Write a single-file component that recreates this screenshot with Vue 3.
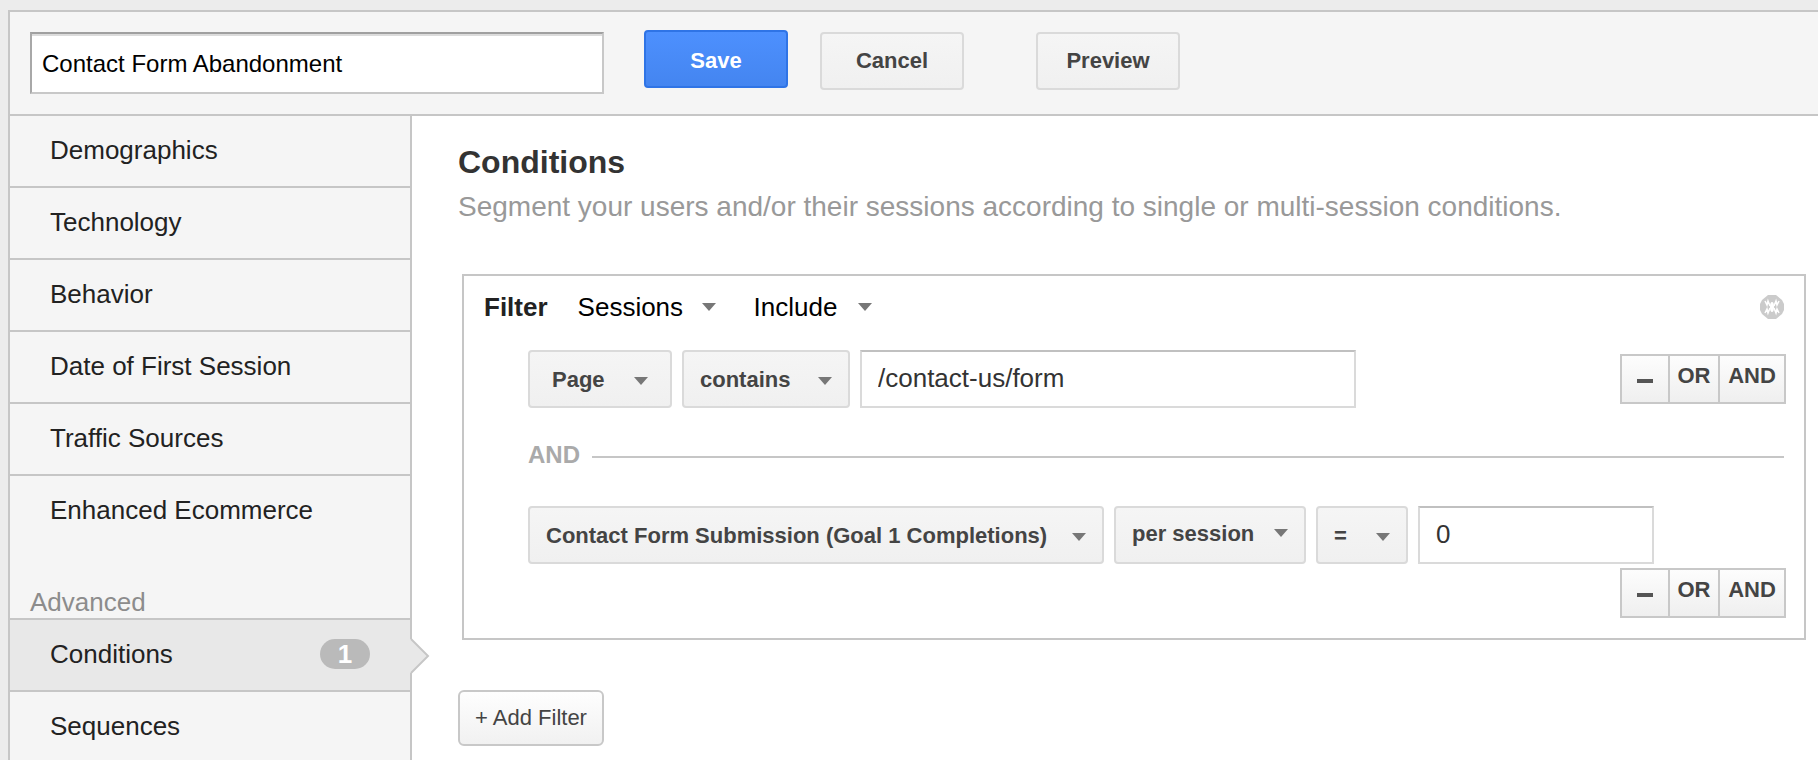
<script setup>
import { ref } from 'vue'

const segmentName = ref('Contact Form Abandonment')
const basicItems = ['Demographics', 'Technology', 'Behavior', 'Date of First Session', 'Traffic Sources', 'Enhanced Ecommerce']
const scope = ref('Sessions')
const mode = ref('Include')
const pageValue = ref('/contact-us/form')
const goalValue = ref('0')
</script>

<template>
  <div class="page">
    <div class="panel">
      <header class="toolbar">
        <input v-model="segmentName" class="name" type="text" aria-label="Segment name" />
        <button class="btn primary" type="button">Save</button>
        <button class="btn cancel" type="button">Cancel</button>
        <button class="btn preview" type="button">Preview</button>
      </header>
      <div class="body">
        <nav class="sidebar">
          <a v-for="item in basicItems" :key="item" class="item" href="#">{{ item }}</a>
          <h2 class="group">Advanced</h2>
          <a class="item active" href="#">
            <span>Conditions</span>
            <span class="badge">1</span>
            <svg class="pointer" width="22" height="40" viewBox="0 0 22 40" aria-hidden="true">
              <path d="M0 2 L1 2 L18 19 L1 36 L0 36 Z" fill="#e8e8e8" />
              <path d="M1 2 L18 19 L1 36" fill="none" stroke="#c6c6c6" stroke-width="2" />
            </svg>
          </a>
          <a class="item" href="#">Sequences</a>
        </nav>
        <main class="content">
          <h1>Conditions</h1>
          <p class="lead">Segment your users and/or their sessions according to single or multi-session conditions.</p>

          <section class="filter">
            <div class="filter-head">
              <strong>Filter</strong>
              <div class="pick flat sessions">
                <select v-model="scope" aria-label="Filter scope"><option>Sessions</option></select>
                <svg width="14" height="8" viewBox="0 0 14 8" aria-hidden="true"><path d="M0 0H14L7 8Z" /></svg>
              </div>
              <div class="pick flat include">
                <select v-model="mode" aria-label="Filter mode"><option>Include</option></select>
                <svg width="14" height="8" viewBox="0 0 14 8" aria-hidden="true"><path d="M0 0H14L7 8Z" /></svg>
              </div>
              <button class="close" type="button" aria-label="Remove filter">
                <svg width="24" height="24" viewBox="0 0 24 24" aria-hidden="true">
                  <path d="M8 0H16L22 5L24 9V15L22 19L16 24H8L2 19L0 15V9L2 5Z" fill="#cbcbcb" />
                  <ellipse cx="12" cy="12" rx="2" ry="5" fill="#fff" />
                  <path
                    d="M5 6L7 10L8 6L10 11M19 6L17 10L16 6L14 11M5 18L7 14L8 18L10 13M19 18L17 14L16 18L14 13"
                    fill="none"
                    stroke="#fff"
                    stroke-width="1.5"
                  />
                </svg>
              </button>
            </div>

            <div class="row">
              <div class="pick page-dim">
                <select aria-label="Dimension"><option>Page</option></select>
                <svg width="14" height="8" viewBox="0 0 14 8" aria-hidden="true"><path d="M0 0H14L7 8Z" /></svg>
              </div>
              <div class="pick contains">
                <select aria-label="Match type"><option>contains</option></select>
                <svg width="14" height="8" viewBox="0 0 14 8" aria-hidden="true"><path d="M0 0H14L7 8Z" /></svg>
              </div>
              <input v-model="pageValue" class="value wide" type="text" aria-label="Page value" />
              <div class="ops">
                <button type="button" aria-label="Remove condition"><span class="minus"></span></button>
                <button type="button">OR</button>
                <button type="button">AND</button>
              </div>
            </div>

            <div class="joiner"><span>AND</span><hr /></div>

            <div class="row second">
              <div class="pick goal">
                <select aria-label="Metric"><option>Contact Form Submission (Goal 1 Completions)</option></select>
                <svg width="14" height="8" viewBox="0 0 14 8" aria-hidden="true"><path d="M0 0H14L7 8Z" /></svg>
              </div>
              <div class="pick per">
                <select aria-label="Metric scope"><option>per session</option></select>
                <svg width="14" height="8" viewBox="0 0 14 8" aria-hidden="true"><path d="M0 0H14L7 8Z" /></svg>
              </div>
              <div class="pick equals">
                <select aria-label="Comparison"><option>=</option></select>
                <svg width="14" height="8" viewBox="0 0 14 8" aria-hidden="true"><path d="M0 0H14L7 8Z" /></svg>
              </div>
              <input v-model="goalValue" class="value narrow" type="text" aria-label="Metric value" />
            </div>
            <div class="ops below">
              <button type="button" aria-label="Remove condition"><span class="minus"></span></button>
              <button type="button">OR</button>
              <button type="button">AND</button>
            </div>
          </section>

          <button class="add" type="button">+ Add Filter</button>
        </main>
      </div>
    </div>
  </div>
</template>

<style>
body {
  margin: 0;
  background: #ececec;
}
</style>

<style scoped>
.page,
.page * {
  box-sizing: border-box;
}
.page {
  height: 100vh;
  padding: 10px 0 0 8px;
  display: flex;
  font-family: "Liberation Sans", Arial, sans-serif;
  color: #222;
  overflow: hidden;
}
button,
input,
select {
  font-family: inherit;
  margin: 0;
}
.panel {
  flex: 1;
  min-width: 0;
  display: flex;
  flex-direction: column;
  border: 2px solid #c6c6c6;
  border-width: 2px 0 0 2px;
  background: #fff;
}
.toolbar {
  flex: none;
  display: flex;
  align-items: flex-start;
  padding: 18px 20px 20px;
  background: #f5f5f5;
  border-bottom: 2px solid #c6c6c6;
}
.name {
  width: 574px;
  height: 62px;
  margin-top: 2px;
  padding: 2px 10px 0;
  border: 2px solid #c8c8c8;
  border-top-color: #a0a0a0;
  border-left-color: #a8a8a8;
  box-shadow: inset 0 2px 0 #dcdcdc;
  background: #fff;
  font-size: 24px;
  color: #000;
}
.btn {
  width: 144px;
  height: 58px;
  margin-top: 2px;
  padding: 0;
  border: 2px solid #dadada;
  border-radius: 4px;
  background: linear-gradient(#f5f5f5, #f0f0f0);
  font-size: 22px;
  font-weight: bold;
  color: #444;
}
.primary {
  margin: 0 0 0 40px;
  padding: 4px 0 0;
  border-color: #2f74e6;
  background: linear-gradient(#4d90fe, #4485f0);
  color: #fff;
}
.cancel {
  margin-left: 32px;
}
.preview {
  margin-left: 72px;
}
.body {
  flex: 1;
  min-height: 0;
  display: flex;
}
.sidebar {
  width: 402px;
  flex: none;
  background: #f5f5f5;
  border-right: 2px solid #c6c6c6;
}
.item {
  position: relative;
  display: flex;
  align-items: center;
  justify-content: space-between;
  height: 72px;
  padding: 0 40px 2px;
  border-bottom: 2px solid #c6c6c6;
  font-size: 26px;
  line-height: 30px;
  color: #222;
  text-decoration: none;
}
.item:nth-of-type(6) {
  border-bottom-color: transparent;
}
.group {
  margin: 0;
  height: 72px;
  padding: 39px 20px 0;
  border-bottom: 2px solid #c6c6c6;
  font-size: 26px;
  line-height: 30px;
  font-weight: normal;
  color: #8c8c8c;
}
.active {
  background: #e8e8e8;
}
.badge {
  width: 50px;
  height: 30px;
  border-radius: 15px;
  background: #bababa;
  color: #fff;
  font-size: 26px;
  font-weight: bold;
  text-align: center;
}
.pointer {
  position: absolute;
  left: 100%;
  top: 17px;
}
.content {
  flex: 1;
  min-width: 0;
  padding: 26px 12px 14px 46px;
}
h1 {
  margin: 0;
  font-size: 32px;
  line-height: 40px;
  color: #333;
}
.lead {
  margin: 7px 0 0;
  font-size: 28px;
  line-height: 36px;
  color: #999;
}
.filter {
  margin: 49px 0 50px 4px;
  padding: 13px 18px 20px 20px;
  border: 2px solid #c6c6c6;
}
.filter-head {
  display: flex;
  align-items: center;
  height: 36px;
  font-size: 26px;
}
.pick {
  position: relative;
  flex: none;
}
.pick svg {
  position: absolute;
  top: 27px;
  right: 18px;
  fill: #777;
  pointer-events: none;
}
.pick select {
  appearance: none;
  display: block;
  width: 100%;
  height: 58px;
  padding: 0 16px;
  border: 2px solid #dadada;
  border-radius: 4px;
  background: linear-gradient(#f5f5f5, #f0f0f0);
  font-size: 22px;
  font-weight: bold;
  color: #444;
}
.pick.flat select {
  height: 36px;
  padding: 0;
  border: 0;
  background: none;
  font-size: 26px;
  font-weight: normal;
  color: #000;
}
.pick.flat svg {
  top: 14px;
  right: 0;
}
.sessions {
  width: 138px;
  margin-left: 30px;
}
.include {
  width: 118px;
  margin-left: 38px;
}
.close {
  margin-left: auto;
  margin-right: 2px;
  padding: 0;
  border: 0;
  background: none;
}
.close svg {
  display: block;
}
.row {
  display: flex;
  gap: 10px;
  margin: 25px 0 0 44px;
}
.page-dim {
  width: 144px;
}
.page-dim select {
  padding-left: 22px;
}
.pick.page-dim svg {
  right: 24px;
}
.contains {
  width: 168px;
}
.value {
  height: 58px;
  padding: 0 16px 2px;
  border: 2px solid #dadada;
  border-top-color: #c0c0c0;
  background: #fff;
  font-size: 26px;
  color: #333;
}
.wide {
  width: 496px;
}
.narrow {
  width: 236px;
}
.goal {
  width: 576px;
}
.per {
  width: 192px;
}
.pick.per select {
  padding-bottom: 4px;
}
.pick.per svg {
  top: 23px;
}
.equals {
  width: 92px;
}
.ops {
  display: flex;
  flex: none;
  height: 50px;
  margin: 4px 0 0 auto;
  border: 2px solid #c8c8c8;
}
.ops button {
  width: 50px;
  padding: 0 0 6px;
  border: 0;
  border-left: 2px solid #c8c8c8;
  background: linear-gradient(#fdfdfd, #efefef);
  font-size: 22px;
  font-weight: bold;
  color: #444;
}
.ops button:first-child {
  width: 46px;
  border-left: 0;
}
.ops button:last-child {
  width: 66px;
}
.minus {
  display: inline-block;
  width: 16px;
  height: 4px;
  background: #555;
}
.below {
  width: 166px;
}
.joiner {
  display: flex;
  align-items: center;
  gap: 12px;
  margin: 33px 2px 0 44px;
  font-size: 24px;
  line-height: 28px;
  font-weight: bold;
  color: #aaa;
}
.joiner hr {
  flex: 1;
  margin: 4px 0 0;
  border: 0;
  border-top: 2px solid #c6c6c6;
}
.second {
  margin-top: 37px;
}
.add {
  height: 56px;
  width: 146px;
  padding: 0;
  border: 2px solid #c8c8c8;
  border-radius: 6px;
  background: linear-gradient(#fefefe, #f1f1f1);
  font-size: 22px;
  color: #444;
  display: block;
}
</style>
